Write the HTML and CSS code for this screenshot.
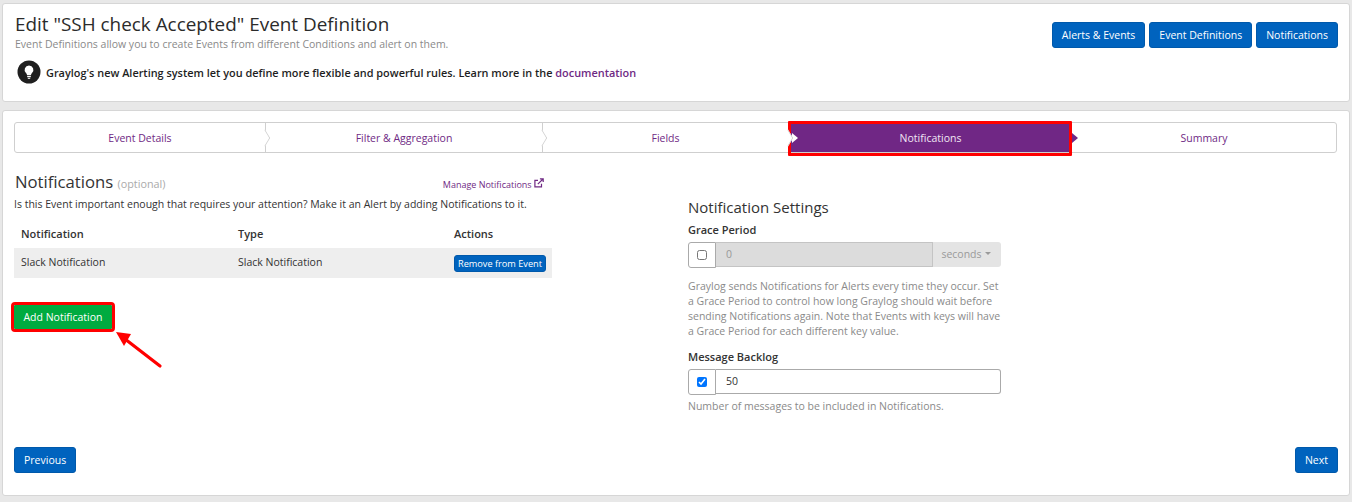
FILE: index.html
```html
<!DOCTYPE html>
<html lang="en">
<head>
  <meta charset="UTF-8">
  <title>Edit Event Definition</title>
  <link rel="stylesheet" href="styles.css">
</head>
<body>
  <!-- Page header -->
  <div class="panel header-panel">
    <div class="header-text">
      <h1>Edit "SSH check Accepted" Event Definition</h1>
      <p class="subtitle">Event Definitions allow you to create Events from different Conditions and alert on them.</p>
      <div class="notice">
        <span class="bulb">
          <svg width="24" height="24" viewBox="0 0 24 24">
            <circle cx="12" cy="12" r="11.5" fill="#1f1f1f"/>
            <path d="M12 5.5a4.4 4.4 0 0 0-3 7.6c.7.7 1 1.3 1 2.1h4c0-.8.3-1.4 1-2.1a4.4 4.4 0 0 0-3-7.6z" fill="#fff"/>
            <rect x="10.2" y="16" width="3.6" height="1.2" fill="#fff"/>
            <rect x="10.8" y="17.8" width="2.4" height="1" fill="#fff"/>
          </svg>
        </span>
        <b>Graylog's new Alerting system let you define more flexible and powerful rules. Learn more in the <a href="#">documentation</a></b>
      </div>
    </div>
    <div class="header-buttons">
      <button class="btn">Alerts &amp; Events</button>
      <button class="btn">Event Definitions</button>
      <button class="btn">Notifications</button>
    </div>
  </div>

  <div class="panel main-panel">
    <!-- Steps -->
    <div class="steps">
      <div class="step">Event Details</div>
      <div class="step">Filter &amp; Aggregation</div>
      <div class="step">Fields</div>
      <div class="step active">Notifications<span class="highlight"></span></div>
      <div class="step last">Summary</div>
    </div>

    <div class="columns">
      <!-- Notifications list -->
      <div class="left-col">
        <div class="section-head">
          <h2>Notifications <small>(optional)</small></h2>
          <a class="manage" href="#">Manage Notifications
            <svg width="10" height="10" viewBox="0 0 10 10" fill="none" stroke="#6f2a84" stroke-width="1.2">
              <path d="M7.5 5.8v3.1H.9V2.4H4"/>
              <path d="M3.8 6.2 9 1M5.9.8h3.3v3.3"/>
            </svg>
          </a>
        </div>
        <p class="intro">Is this Event important enough that requires your attention? Make it an Alert by adding Notifications to it.</p>
        <table>
          <thead>
            <tr><th class="col-name">Notification</th><th class="col-type">Type</th><th>Actions</th></tr>
          </thead>
          <tbody>
            <tr>
              <td>Slack Notification</td>
              <td>Slack Notification</td>
              <td class="cell-action"><button class="btn btn-xs">Remove from Event</button></td>
            </tr>
          </tbody>
        </table>
        <div class="add-wrap">
          <button class="btn btn-add">Add Notification</button>
          <svg class="arrow" width="56" height="44" viewBox="0 0 56 44">
            <path d="M45 37 10 10" stroke="#f00" stroke-width="3.2" stroke-linecap="round" fill="none"/>
            <path d="M1 3 16 5 9 17z" fill="#f00"/>
          </svg>
        </div>
      </div>

      <!-- Settings -->
      <div class="right-col">
        <h3>Notification Settings</h3>
        <label class="field-label">Grace Period</label>
        <div class="input-group">
          <span class="addon"><input type="checkbox"></span>
          <input class="text-input" type="text" value="0" disabled>
          <span class="unit">seconds <i class="caret"></i></span>
        </div>
        <p class="help help-grace">Graylog sends Notifications for Alerts every time they occur. Set a Grace Period to control how long Graylog should wait before sending Notifications again. Note that Events with keys will have a Grace Period for each different key value.</p>
        <label class="field-label">Message Backlog</label>
        <div class="input-group">
          <span class="addon"><input type="checkbox" checked></span>
          <input class="text-input" type="text" value="50">
        </div>
        <p class="help help-backlog">Number of messages to be included in Notifications.</p>
      </div>
    </div>

    <div class="footer-buttons">
      <button class="btn">Previous</button>
      <button class="btn">Next</button>
    </div>
  </div>
</body>
</html>
```

FILE: styles.css
```css
* {
  box-sizing: border-box;
}

body {
  margin: 0;
  padding: 3px 2px 0;
  height: 502px;
  overflow: hidden;
  background-color: #e8e8e8;
  font-family: "Open Sans", sans-serif;
  font-size: 10.5px;
  color: #333;
}

a {
  color: #6f2a84;
  text-decoration: none;
}

.panel {
  background-color: #fff;
  border: 1px solid #d6d6d6;
  border-radius: 3px;
}

/* Header */
.header-panel {
  height: 99px;
  padding: 8px 11px 0 12px;
  display: flex;
  justify-content: space-between;
}

h1 {
  margin: 0;
  font-size: 18.9px;
  line-height: 24px;
  font-weight: 400;
  color: #2b2b2b;
}

.subtitle {
  margin: 1px 0 0;
  font-size: 10.5px;
  line-height: 15px;
  color: #8a8a8a;
}

.notice {
  margin-top: 8px;
  padding-left: 2px;
  display: flex;
  align-items: center;
  gap: 5px;
  font-size: 10.9px;
  color: #1e1e1e;
}

.notice b {
  font-weight: 600;
}

.bulb {
  display: flex;
}

.header-buttons {
  display: flex;
  gap: 4px;
  margin-top: 10px;
  align-items: flex-start;
}

.btn {
  font-family: inherit;
  font-size: 10.5px;
  height: 26px;
  padding: 0 9px;
  white-space: nowrap;
  color: #fff;
  background-color: #0063be;
  border: 1px solid #0059ab;
  border-radius: 3px;
}

/* Main panel */
.main-panel {
  margin-top: 8px;
  height: 386px;
  padding: 11px 12px 0 11px;
  position: relative;
}

.steps {
  display: grid;
  grid-template-columns: 251px 277px 246px 283px 1fr;
  height: 31px;
  border: 1px solid #cfcfcf;
  border-radius: 3px;
}

.step {
  position: relative;
  display: flex;
  align-items: center;
  justify-content: center;
  color: #6f2a84;
  border-right: 1px solid #cfcfcf;
}

/* chevron between the steps */
.step::after {
  content: "";
  position: absolute;
  z-index: 2;
  top: 50%;
  right: -6px;
  width: 11px;
  height: 11px;
  background-color: #fff;
  border-top: 1px solid #cfcfcf;
  border-right: 1px solid #cfcfcf;
  transform: translateY(-50%) scaleX(0.6) rotate(45deg);
}

.step.last {
  border-right: none;
}

.step.last::after {
  display: none;
}

.step.active {
  color: #f1e6f4;
  background-color: #702785;
  border-right: none;
}

.step.active::before {
  content: "";
  position: absolute;
  left: 3px;
  top: 50%;
  margin-top: -5px;
  border-left: 6px solid #fff;
  border-top: 5px solid transparent;
  border-bottom: 5px solid transparent;
}

/* small purple tip sticking out of the red box */
.step.active::after {
  right: -6px;
  width: 0;
  height: 0;
  background: none;
  border-top: 5px solid transparent;
  border-bottom: 5px solid transparent;
  border-right: none;
  border-left: 6px solid #702785;
  transform: translateY(-50%);
}

/* annotation drawn on the screenshot */
.highlight {
  position: absolute;
  left: -1px;
  right: 0;
  top: -2px;
  bottom: -4px;
  border: 3px solid #f00;
  border-radius: 1px;
}

.columns {
  display: flex;
  margin-top: 18px;
}

.left-col {
  width: 538px;
}

.section-head {
  display: flex;
  justify-content: space-between;
  align-items: center;
  padding-right: 8px;
  height: 20px;
}

h2 {
  margin: 0 0 0 1px;
  font-size: 16.7px;
  font-weight: 400;
  color: #333;
}

h2 small {
  font-size: 10.8px;
  color: #aaa;
}

.manage {
  margin-top: 6px;
  font-size: 9px;
}

.intro {
  margin: 6px 0 0;
  font-size: 10.5px;
  line-height: 15px;
}

table {
  width: 100%;
  margin-top: 8px;
  border-collapse: collapse;
  font-size: 10.5px;
}

th {
  text-align: left;
  font-size: 11px;
  font-weight: 600;
  height: 28px;
  padding: 0 7px 2px;
}

td {
  height: 30px;
  padding: 0 7px 2px;
  background-color: #eee;
}

.col-name {
  width: 217px;
}

.col-type {
  width: 216px;
}

.cell-action {
  padding: 0 6px 0 7px;
}

.btn-xs {
  display: block;
  width: 92px;
  height: 17px;
  padding: 0;
  font-size: 9.2px;
}

.add-wrap {
  position: relative;
  margin-top: 27px;
}

.btn-add {
  display: block;
  height: 24px;
  width: 98px;
  padding: 0;
  background-color: #00ab40;
  border: none;
  outline: 3px solid #f00;
  border-radius: 1px;
}

.arrow {
  position: absolute;
  left: 101px;
  top: 24px;
}

.right-col {
  width: 313px;
  margin-left: 136px;
  padding-top: 26px;
}

h3 {
  margin: 0;
  font-size: 15px;
  line-height: 20px;
  font-weight: 400;
  color: #333;
}

.field-label {
  display: block;
  margin-top: 5px;
  font-size: 11px;
  font-weight: 600;
  line-height: 15px;
}

.input-group {
  display: flex;
  height: 26px;
  margin-top: 5px;
}

.addon {
  width: 28px;
  padding-bottom: 1px;
  display: flex;
  align-items: center;
  justify-content: center;
  background-color: #fff;
  border: 1px solid #aaa;
  border-radius: 3px 0 0 3px;
}

.addon input {
  margin: 0;
  width: 10px;
  height: 10px;
}

.text-input {
  flex: 1;
  min-width: 0;
  height: 25px;
  padding: 0 10px 1px;
  font-family: inherit;
  font-size: 10.5px;
  color: #333;
  border: 1px solid #aaa;
  border-left: none;
  border-radius: 0 3px 3px 0;
}

.text-input:disabled {
  color: #999;
  background-color: #dcdcdc;
  border-color: #c4c4c4;
  border-radius: 0;
}

.unit {
  width: 68px;
  height: 25px;
  padding: 0 2px 2px 0;
  display: flex;
  align-items: center;
  justify-content: center;
  gap: 3px;
  color: #9a9a9a;
  background-color: #e4e4e4;
  border-radius: 0 3px 3px 0;
}

.caret {
  border-top: 3px solid #9a9a9a;
  border-left: 3px solid transparent;
  border-right: 3px solid transparent;
}

.help {
  margin: 6px 0 0;
  line-height: 15px;
  color: #8a8a8a;
}

.help-grace {
  margin: 11px 0 10px;
}

.help-backlog {
  margin-top: 4px;
}

.footer-buttons {
  position: absolute;
  left: 11px;
  right: 11px;
  bottom: 22px;
  display: flex;
  justify-content: space-between;
}
```
